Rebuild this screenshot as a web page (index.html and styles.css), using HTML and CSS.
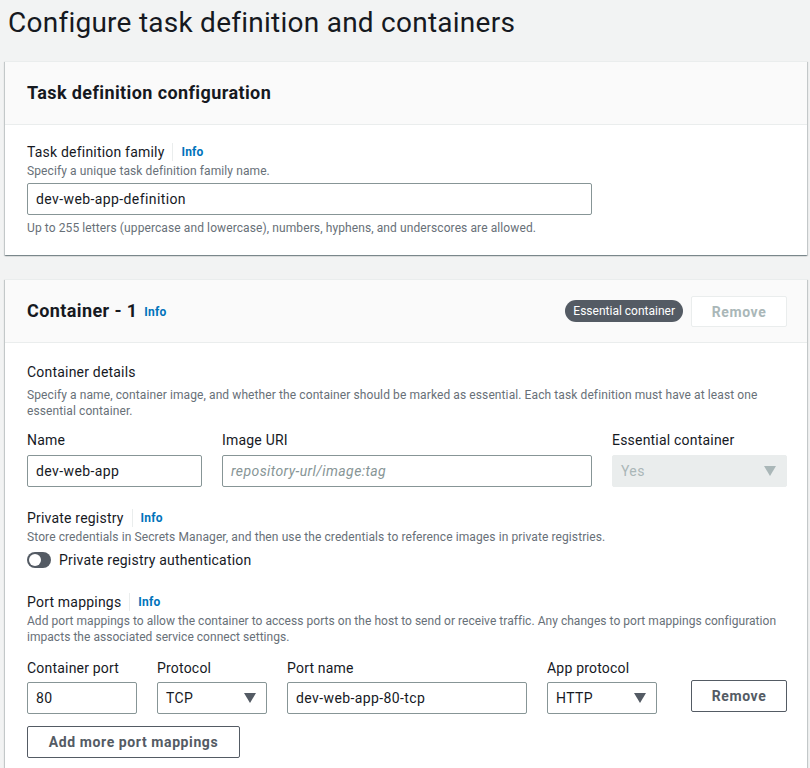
FILE: index.html
```html
<!DOCTYPE html>
<html>
<head>
<meta charset="utf-8">
<link rel="stylesheet" href="styles.css">
</head>
<body>
<h1 class="page-title">Configure task definition and containers</h1>

<section class="panel">
  <header class="panel-head">
    <h2 class="panel-title">Task definition configuration</h2>
  </header>
  <div class="panel-body body-1">
    <div class="label-row"><span class="label">Task definition family</span><span class="sep"></span><a class="info">Info</a></div>
    <div class="desc">Specify a unique task definition family name.</div>
    <div class="input w-family">dev-web-app-definition</div>
    <div class="hint">Up to 255 letters (uppercase and lowercase), numbers, hyphens, and underscores are allowed.</div>
  </div>
</section>

<section class="panel panel-2">
  <header class="panel-head head-row">
    <h2 class="panel-title">Container - 1 <a class="info info-lg">Info</a></h2>
    <div class="head-actions">
      <span class="badge">Essential container</span>
      <button class="btn btn-disabled">Remove</button>
    </div>
  </header>
  <div class="panel-body body-2">
    <div class="sub-title">Container details</div>
    <div class="desc desc-block">Specify a name, container image, and whether the container should be marked as essential. Each task definition must have at least one essential container.</div>

    <div class="grid-3">
      <div class="field">
        <div class="label">Name</div>
        <div class="input">dev-web-app</div>
      </div>
      <div class="field">
        <div class="label">Image URI</div>
        <div class="input placeholder">repository-url/image:tag</div>
      </div>
      <div class="field">
        <div class="label">Essential container</div>
        <div class="select disabled"><span>Yes</span><span class="caret"></span></div>
      </div>
    </div>

    <div class="group">
      <div class="label-row"><span class="label">Private registry</span><span class="sep"></span><a class="info">Info</a></div>
      <div class="desc">Store credentials in Secrets Manager, and then use the credentials to reference images in private registries.</div>
      <div class="toggle-row"><span class="toggle"><span class="knob"></span></span><span class="toggle-label">Private registry authentication</span></div>
    </div>

    <div class="group group-ports">
      <div class="label-row"><span class="label">Port mappings</span><span class="sep"></span><a class="info">Info</a></div>
      <div class="desc desc-tight">Add port mappings to allow the container to access ports on the host to send or receive traffic. Any changes to port mappings configuration impacts the associated service connect settings.</div>
      <div class="ports">
        <div class="field">
          <div class="label">Container port</div>
          <div class="input">80</div>
        </div>
        <div class="field">
          <div class="label">Protocol</div>
          <div class="select"><span>TCP</span><span class="caret"></span></div>
        </div>
        <div class="field">
          <div class="label">Port name</div>
          <div class="input">dev-web-app-80-tcp</div>
        </div>
        <div class="field">
          <div class="label">App protocol</div>
          <div class="select"><span>HTTP</span><span class="caret"></span></div>
        </div>
        <div class="field field-btn">
          <button class="btn">Remove</button>
        </div>
      </div>
      <button class="btn btn-add">Add more port mappings</button>
    </div>
  </div>
</section>
</body>
</html>
```
FILE: styles.css
```css
* { box-sizing: border-box; }
html, body { margin: 0; padding: 0; }
body {
  background: #f2f3f3;
  font-family: Roboto, "Liberation Sans", sans-serif;
  color: #16191f;
  font-size: 14px;
  padding: 0 3px 0 5px;
  overflow: hidden;
  height: 768px;
}
.page-title {
  margin: 0;
  padding: 5px 0 0 3px;
  font-size: 28px;
  font-weight: 400;
  line-height: 36px;
  height: 61px;
  letter-spacing: 0.25px;
}
.panel {
  background: #fff;
  border-top: 1px solid #eaeded;
  box-shadow: 0 1px 1px 0 rgba(0,28,36,.3), 1px 1px 1px 0 rgba(0,28,36,.15), -1px 1px 1px 0 rgba(0,28,36,.15);
}
.panel-2 { margin-top: 24px; }
.panel-head {
  background: #fafafa;
  border-bottom: 1px solid #eaeded;
  height: 63px;
  padding: 0 20px 0 22px;
  display: flex;
  align-items: center;
}
.panel-title {
  margin: 0;
  font-size: 18px;
  font-weight: 700;
  line-height: 22px;
  letter-spacing: 0.4px;
}
.head-row { justify-content: space-between; }
.head-actions { display: flex; align-items: center; gap: 8px; }
.badge {
  background: #545b64;
  color: #fff;
  font-size: 12px;
  line-height: 22px;
  height: 22px;
  padding: 0 8px;
  border-radius: 11px;
}
.panel-body { padding: 19px 20px 19px 22px; }
.body-1 { padding-top: 18px; }
.label-row { display: flex; align-items: center; height: 18px; }
.label { font-size: 14px; line-height: 18px; color: #16191f; letter-spacing: 0.2px; }
.sep { width: 1px; height: 18px; background: #eaeded; margin: 0 8px; }
.info { color: #0073bb; font-weight: 700; font-size: 12px; line-height: 18px; letter-spacing: 0.2px; }
.info-lg { font-size: 12px; margin-left: 2px; vertical-align: 1px; letter-spacing: 0.2px; }
.desc { font-size: 12px; line-height: 16px; color: #687078; margin-top: 2px; letter-spacing: 0.1px; }
.desc-block { margin-top: 6px; }
.desc-tight { letter-spacing: 0.04px; }
.input, .select {
  height: 32px;
  border: 1px solid #879596;
  border-radius: 2px;
  background: #fff;
  padding: 0 8px;
  font-size: 14px;
  line-height: 30px;
  color: #16191f;
  letter-spacing: 0.4px;
}
.w-family { width: 565px; margin-top: 4px; }
.hint { font-size: 12px; line-height: 16px; color: #687078; margin-top: 5px; letter-spacing: 0.1px; }
.placeholder { font-style: italic; color: #879596; }
.select { display: flex; justify-content: space-between; align-items: center; }
.caret {
  width: 0; height: 0;
  border-left: 6px solid transparent;
  border-right: 6px solid transparent;
  border-top: 10px solid #545b64;
  margin-right: 2px;
}
.select.disabled { background: #eaeded; border-color: #eaeded; color: #aab7b8; }
.select.disabled .caret { border-top-color: #aab7b8; }

.sub-title { font-size: 14px; line-height: 18px; margin-top: 1px; letter-spacing: 0.2px; }
.grid-3 {
  display: grid;
  grid-template-columns: 175px 370px 175px;
  justify-content: space-between;
  column-gap: 20px;
  margin-top: 12px;
}
.field .label { margin-bottom: 6px; }
.group { margin-top: 22px; }
.toggle-row { display: flex; align-items: center; margin-top: 4px; height: 22px; }
.toggle {
  width: 24px; height: 16px; border-radius: 8px;
  background: #545b64;
  position: relative;
  display: inline-block;
}
.knob {
  position: absolute; left: 2px; top: 2px;
  width: 12px; height: 12px; border-radius: 50%;
  background: #fff;
}
.toggle-label { margin-left: 8px; font-size: 14px; letter-spacing: 0.2px; }
.group-ports { margin-top: 22px; }
.ports {
  display: grid;
  grid-template-columns: 110px 110px 240px 110px 1fr;
  column-gap: 20px;
  margin-top: 14px;
  align-items: end;
}
.ports .label { margin-bottom: 5px; }
.field-btn { display: flex; justify-content: flex-end; padding-bottom: 2px; }
.btn {
  font-family: inherit;
  font-size: 14px;
  font-weight: 700;
  background: #fff;
  color: #545b64;
  border: 1px solid #545b64;
  border-radius: 2px;
  height: 32px;
  padding: 0 20px;
  line-height: 30px;
  letter-spacing: 0.6px;
  cursor: pointer;
}
.field-btn .btn { width: 96px; padding: 0; }
.btn-disabled { width: 96px; padding: 0; color: #aab7b8; border-color: #eaeded; height: 31px; }
.btn-add { margin-top: 12px; width: 213px; padding: 0; }
```
